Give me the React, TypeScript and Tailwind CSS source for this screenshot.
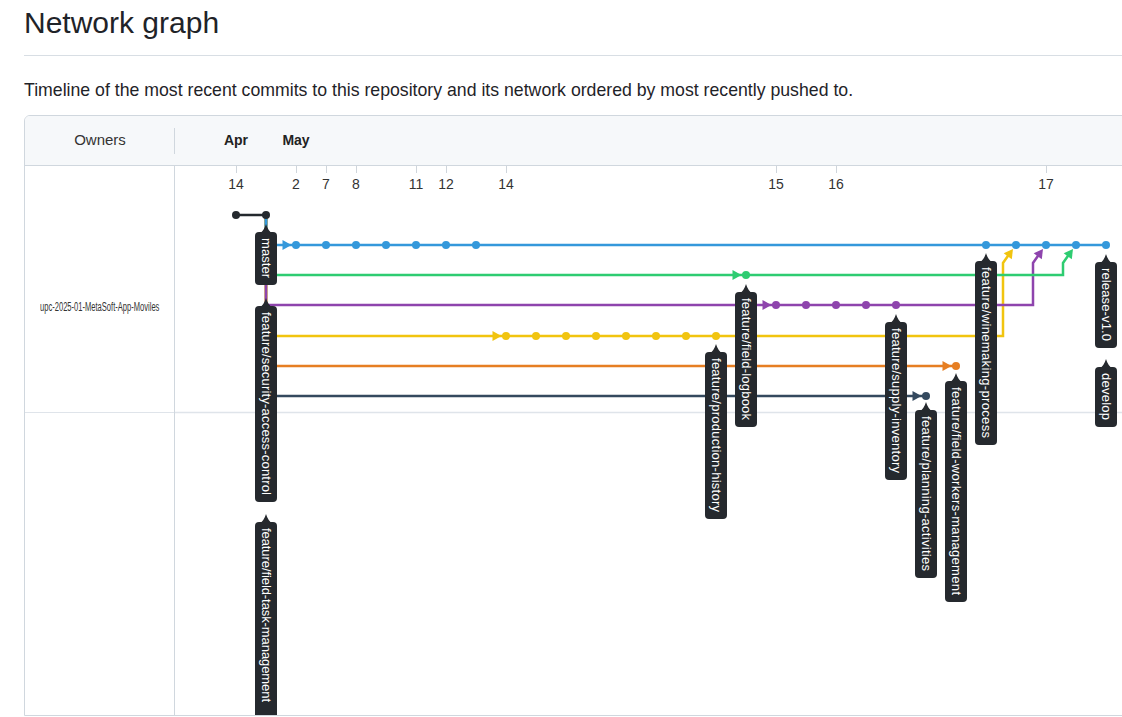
import React from 'react';

const COLORS = {
  black: '#24292e',
  blue: '#3498db',
  green: '#2ecc71',
  purple: '#8e44ad',
  yellow: '#f1c40f',
  orange: '#e67e22',
  slate: '#34495e',
};

const LABEL_BG = '#25292e';

const days: [number, string][] = [
  [236, '14'],
  [296, '2'],
  [326, '7'],
  [356, '8'],
  [416, '11'],
  [446, '12'],
  [506, '14'],
  [776, '15'],
  [836, '16'],
  [1046, '17'],
];

type Branch = {
  color: string;
  y: number;
  end: number;
  dots: number[];
  arrowAt?: number;
  merge?: { x: number; to: number };
};

const branches: Branch[] = [
  { color: COLORS.slate, y: 396, end: 926, dots: [926], arrowAt: 926 },
  { color: COLORS.orange, y: 366, end: 956, dots: [956], arrowAt: 956 },
  {
    color: COLORS.yellow,
    y: 336,
    end: 1003,
    dots: [506, 536, 566, 596, 626, 656, 686, 716],
    arrowAt: 506,
    merge: { x: 1003, to: 1016 },
  },
  {
    color: COLORS.purple,
    y: 305,
    end: 1033,
    dots: [776, 806, 836, 866, 896],
    arrowAt: 776,
    merge: { x: 1033, to: 1046 },
  },
  {
    color: COLORS.green,
    y: 275,
    end: 1063,
    dots: [746],
    arrowAt: 746,
    merge: { x: 1063, to: 1076 },
  },
  {
    color: COLORS.blue,
    y: 245,
    end: 1106,
    dots: [296, 326, 356, 386, 416, 446, 476, 986, 1016, 1046, 1076, 1106],
    arrowAt: 296,
  },
];

// text: length of the label text along the box, when it differs from box height - 13
const labels: { name: string; cx: number; top: number; bottom: number; text?: number }[] = [
  { name: 'master', cx: 266, top: 232, bottom: 285 },
  { name: 'feature/security-access-control', cx: 266, top: 306, bottom: 502 },
  { name: 'feature/field-task-management', cx: 266, top: 522, bottom: 745, text: 174 },
  { name: 'feature/field-logbook', cx: 746, top: 292, bottom: 427 },
  { name: 'feature/production-history', cx: 716, top: 352, bottom: 519 },
  { name: 'feature/supply-inventory', cx: 896, top: 322, bottom: 480 },
  { name: 'feature/planning-activities', cx: 926, top: 410, bottom: 578 },
  { name: 'feature/field-workers-management', cx: 956, top: 381, bottom: 602 },
  { name: 'feature/winemaking-process', cx: 986, top: 261, bottom: 445 },
  { name: 'release-v1.0', cx: 1106, top: 262, bottom: 348 },
  { name: 'develop', cx: 1106, top: 367, bottom: 427 },
];

// triangle with its tip at (tx, ty), pointing along (dx, dy)
function arrow(tx: number, ty: number, dx: number, dy: number) {
  const len = Math.hypot(dx, dy);
  const ux = dx / len;
  const uy = dy / len;
  const bx = tx - ux * 9;
  const by = ty - uy * 9;
  const px = -uy * 5;
  const py = ux * 5;
  return `${tx},${ty} ${bx + px},${by + py} ${bx - px},${by - py}`;
}

function Graph() {
  return (
    <svg
      width={960}
      height={550}
      viewBox="175 166 960 550"
      className="block shrink-0"
      style={{ fontFamily: '"Liberation Sans", Arial, sans-serif' }}
    >
      {/* owner row separator */}
      <line x1={175} x2={1135} y1={412.5} y2={412.5} stroke="#dfe4ea" strokeWidth={1.5} />

      {/* day ticks */}
      {days.map(([x, d]) => (
        <g key={x + d}>
          <line x1={x + 0.5} x2={x + 0.5} y1={166} y2={173} stroke="#cfd5db" strokeWidth={1} />
          <text x={x} y={189} textAnchor="middle" fontSize={14} fill="#333">
            {d}
          </text>
        </g>
      ))}

      {/* vertical forks from master */}
      {branches.map((b) => (
        <line
          key={'v' + b.color}
          x1={266}
          x2={266}
          y1={215}
          y2={b.y}
          stroke={b.color}
          strokeWidth={2.5}
        />
      ))}

      {/* root commits */}
      <line x1={236} x2={266} y1={215} y2={215} stroke={COLORS.black} strokeWidth={2.5} />
      <circle cx={236} cy={215} r={4} fill={COLORS.black} />
      <circle cx={266} cy={215} r={4} fill={COLORS.black} />

      {branches.map((b) => {
        const pts = b.merge
          ? `266,${b.y} ${b.merge.x},${b.y} ${b.merge.x},263 ${b.merge.x + 7},253`
          : `266,${b.y} ${b.end},${b.y}`;
        return (
          <g key={b.color}>
            <polyline points={pts} fill="none" stroke={b.color} strokeWidth={2.5} strokeLinejoin="miter" />
            {b.arrowAt && (
              <polygon points={arrow(b.arrowAt - 4.5, b.y, 1, 0)} fill={b.color} />
            )}
            {b.merge && (
              <polygon points={arrow(b.merge.to - 3, 249, 13, -18)} fill={b.color} />
            )}
            {b.dots.map((x) => (
              <circle key={x} cx={x} cy={b.y} r={4} fill={b.color} />
            ))}
          </g>
        );
      })}

      {/* branch labels */}
      {labels.map((l) => {
        const h = l.bottom - l.top;
        return (
          <g key={l.name}>
            <path
              d={`M${l.cx - 7},${l.top + 2} Q${l.cx - 2},${l.top - 1} ${l.cx},${l.top - 8} Q${l.cx + 2},${l.top - 1} ${l.cx + 7},${l.top + 2} Z`}
              fill={LABEL_BG}
            />
            <rect x={l.cx - 11} y={l.top} width={22} height={h} rx={4} fill={LABEL_BG} />
            <text
              transform={`translate(${l.cx + 0.5},${l.top + 6}) rotate(90)`}
              dominantBaseline="central"
              fontSize={13}
              fill="#fff"
              textLength={l.text ?? h - 13}
              lengthAdjust="spacing"
            >
              {l.name}
            </text>
          </g>
        );
      })}
    </svg>
  );
}

export default function App() {
  return (
    <div
      className="w-[1122px] h-[717px] overflow-hidden bg-white pl-6 text-[#1f2328]"
      style={{ fontFamily: '"Liberation Sans", Arial, sans-serif' }}
    >
      <div className="w-[1110px]">
        <div className="border-b border-[#d8dee4] pt-[4px] pb-[13px]">
          <h2 className="text-[30px] leading-[38px] font-normal">Network graph</h2>
        </div>

        <p className="mt-[23px] text-[17.7px] leading-[22px]">
          Timeline of the most recent commits to this repository and its network ordered by most
          recently pushed to.
        </p>

        <div className="mt-[14px] h-[601px] border border-[#d0d7de] rounded-tl-md overflow-hidden flex flex-col">
          <div className="h-[50px] shrink-0 bg-[#f6f8fa] border-b border-[#d0d7de] flex items-center">
            <div className="w-[150px] flex justify-center items-center relative h-full">
              <span className="text-[15px] text-[#333]">Owners</span>
              <span className="absolute right-0 top-[12px] h-[26px] border-r border-[#d0d7de]" />
            </div>
            <div className="flex pl-[31px] text-[14px] font-bold text-[#222]">
              <span className="w-[60px] text-center">Apr</span>
              <span className="w-[60px] text-center">May</span>
            </div>
          </div>

          <div className="flex flex-1 min-h-0">
            <div className="w-[150px] shrink-0 border-r border-[#d0d7de]">
              <div className="h-[247px] border-b-[1.5px] border-[#dfe4ea] pt-[133px] flex justify-center">
                <span className="inline-block text-[12px] leading-[16px] text-[#333] scale-x-[0.63] whitespace-nowrap">
                  upc-2025-01-MetaSoft-App-Moviles
                </span>
              </div>
            </div>
            <Graph />
          </div>
        </div>
      </div>
    </div>
  );
}
